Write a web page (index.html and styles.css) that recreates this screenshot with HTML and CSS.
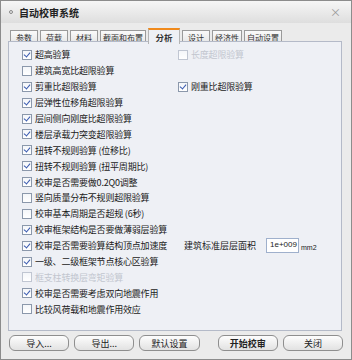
FILE: index.html
```html
<!DOCTYPE html>
<html lang="zh">
<head>
<meta charset="UTF-8">
<title>自动校审系统</title>
<link rel="stylesheet" href="styles.css">
</head>
<body>
<div class="fenetre">
  <div class="titre">
    <span class="titre-icone"></span>
    <span class="titre-texte">自动校审系统</span>
    <span class="fermer">×</span>
  </div>

  <div class="onglets">
    <div class="onglet">参数</div>
    <div class="onglet">荷载</div>
    <div class="onglet">材料</div>
    <div class="onglet">截面和布置</div>
    <div class="onglet actif">分析</div>
    <div class="onglet">设计</div>
    <div class="onglet">经济性</div>
    <div class="onglet">自动设置</div>
  </div>

  <div class="panneau">
    <div class="ligne">
      <label class="case coche"><span class="boite"></span>超高验算</label>
      <label class="case off"><span class="boite"></span>长度超限验算</label>
    </div>
    <div class="ligne">
      <label class="case"><span class="boite"></span>建筑高宽比超限验算</label>
    </div>
    <div class="ligne">
      <label class="case coche"><span class="boite"></span>剪重比超限验算</label>
      <label class="case coche"><span class="boite"></span>刚重比超限验算</label>
    </div>
    <div class="ligne">
      <label class="case coche"><span class="boite"></span>层弹性位移角超限验算</label>
    </div>
    <div class="ligne">
      <label class="case coche"><span class="boite"></span>层间侧向刚度比超限验算</label>
    </div>
    <div class="ligne">
      <label class="case coche"><span class="boite"></span>楼层承载力突变超限验算</label>
    </div>
    <div class="ligne">
      <label class="case coche"><span class="boite"></span>扭转不规则验算 (位移比)</label>
    </div>
    <div class="ligne">
      <label class="case coche"><span class="boite"></span>扭转不规则验算 (扭平周期比)</label>
    </div>
    <div class="ligne">
      <label class="case coche"><span class="boite"></span>校审是否需要做0.2Q0调整</label>
    </div>
    <div class="ligne">
      <label class="case"><span class="boite"></span>竖向质量分布不规则超限验算</label>
    </div>
    <div class="ligne">
      <label class="case"><span class="boite"></span>校审基本周期是否超规 (6秒)</label>
    </div>
    <div class="ligne">
      <label class="case coche"><span class="boite"></span>校审框架结构是否要做薄弱层验算</label>
    </div>
    <div class="ligne">
      <label class="case coche"><span class="boite"></span>校审是否需要验算结构顶点加速度</label>
      <div class="champ">
        <span class="champ-label">建筑标准层层面积</span>
        <span class="saisie">1e+009</span>
        <span class="unite">mm2</span>
      </div>
    </div>
    <div class="ligne">
      <label class="case coche"><span class="boite"></span>一级、二级框架节点核心区验算</label>
    </div>
    <div class="ligne">
      <label class="case off"><span class="boite"></span>框支柱转换层弯矩验算</label>
    </div>
    <div class="ligne">
      <label class="case coche"><span class="boite"></span>校审是否需要考虑双向地震作用</label>
    </div>
    <div class="ligne">
      <label class="case"><span class="boite"></span>比较风荷载和地震作用效应</label>
    </div>
  </div>

  <div class="boutons">
    <button>导入...</button>
    <button>导出...</button>
    <button>默认设置</button>
    <button class="principal">开始校审</button>
    <button>关闭</button>
  </div>
</div>
</body>
</html>
```

FILE: styles.css
```css
* { margin: 0; padding: 0; box-sizing: border-box; }

body {
  font-family: "Noto Sans CJK SC", "Noto Sans", sans-serif;
  font-size: 9px;
  color: #1a1a1a;
  background: #fff;
  width: 352px;
  height: 360px;
  overflow: hidden;
}

.fenetre {
  width: 352px;
  height: 360px;
  background: #ebebeb;
  border: 1px solid #8c8c8c;
  display: flex;
  flex-direction: column;
}

.titre {
  height: 22px;
  background: linear-gradient(#f6f6f6, #dedede);
  display: flex;
  align-items: center;
  padding: 0 8px;
  gap: 6px;
}

.titre-icone {
  width: 4px;
  height: 4px;
  border: 1px solid #888;
  border-radius: 50%;
}

.titre-texte {
  font-size: 10px;
  font-weight: 700;
  color: #222;
  flex: 1;
}

.fermer {
  font-size: 11px;
  color: #999;
  margin-right: 2px;
}

.onglets {
  display: flex;
  padding: 5px 0 0 9px;
  gap: 2px;
  height: 19px;
}

.onglet {
  flex-shrink: 0;
  white-space: nowrap;
  min-width: 28px;
  text-align: center;
  padding: 0 2px;
  height: 14px;
  margin-top: 2px;
  border: 1px solid #9a9a9a;
  border-bottom: none;
  background: linear-gradient(#fafafa, #e4e4e4);
  color: #333;
  font-size: 8px;
  line-height: 13px;
}

.onglet.actif {
  margin-top: 0;
  min-width: 32px;
  height: 16px;
  border-color: #b4b4b4;
  border-top: 2px solid #f08a1c;
  background: #eef0f5;
  font-weight: 700;
  font-size: 8.5px;
  padding: 0 4px;
  line-height: 14px;
  position: relative;
  z-index: 1;
}

.panneau {
  margin: -1px 9px 0 7px;
  height: 290px;
  background: #eef0f5;
  border: 1px solid #b4bac8;
  padding: 5px 0 0 13px;
  display: flex;
  flex-direction: column;
}

.ligne {
  height: 15.9px;
  display: grid;
  grid-template-columns: 156px 1fr;
  align-items: center;
}

.case {
  display: flex;
  align-items: center;
  gap: 3px;
  white-space: nowrap;
  letter-spacing: -0.2px;
}

.boite {
  width: 10px;
  height: 10px;
  border: 1px solid #8b98ab;
  background: linear-gradient(#f4f6f9, #ffffff);
  flex-shrink: 0;
  position: relative;
}

.case.coche .boite::after {
  content: "";
  position: absolute;
  left: 2px;
  top: 0px;
  width: 3px;
  height: 5px;
  border: solid #3a5bb0;
  border-width: 0 1.5px 1.5px 0;
  transform: rotate(40deg);
}

.case.off { color: #c2c6cf; }
.case.off .boite { border-color: #c0c6d2; }

.champ {
  display: flex;
  align-items: center;
  padding-left: 6px;
}

.champ-label { width: 82px; }

.saisie {
  width: 33px;
  height: 15px;
  border: 1px solid #9fb0cc;
  background: #fff;
  padding-left: 3px;
  line-height: 12px;
  font-size: 8px;
  font-family: "Liberation Sans", sans-serif;
}

.unite {
  font-size: 7px;
  margin-left: 2px;
  margin-top: 4px;
  font-family: "Liberation Sans", sans-serif;
}

.boutons {
  display: flex;
  padding: 4px 8px 0 8px;
  gap: 5px;
}

.boutons button {
  width: 61px;
  height: 16px;
  border: 1px solid #8e8e8e;
  border-radius: 6px;
  background: linear-gradient(#fdfdfd, #e2e2e2);
  font-family: inherit;
  font-size: 9px;
  color: #222;
}

.boutons button.principal {
  margin-left: 13px;
  font-weight: 700;
}
```
